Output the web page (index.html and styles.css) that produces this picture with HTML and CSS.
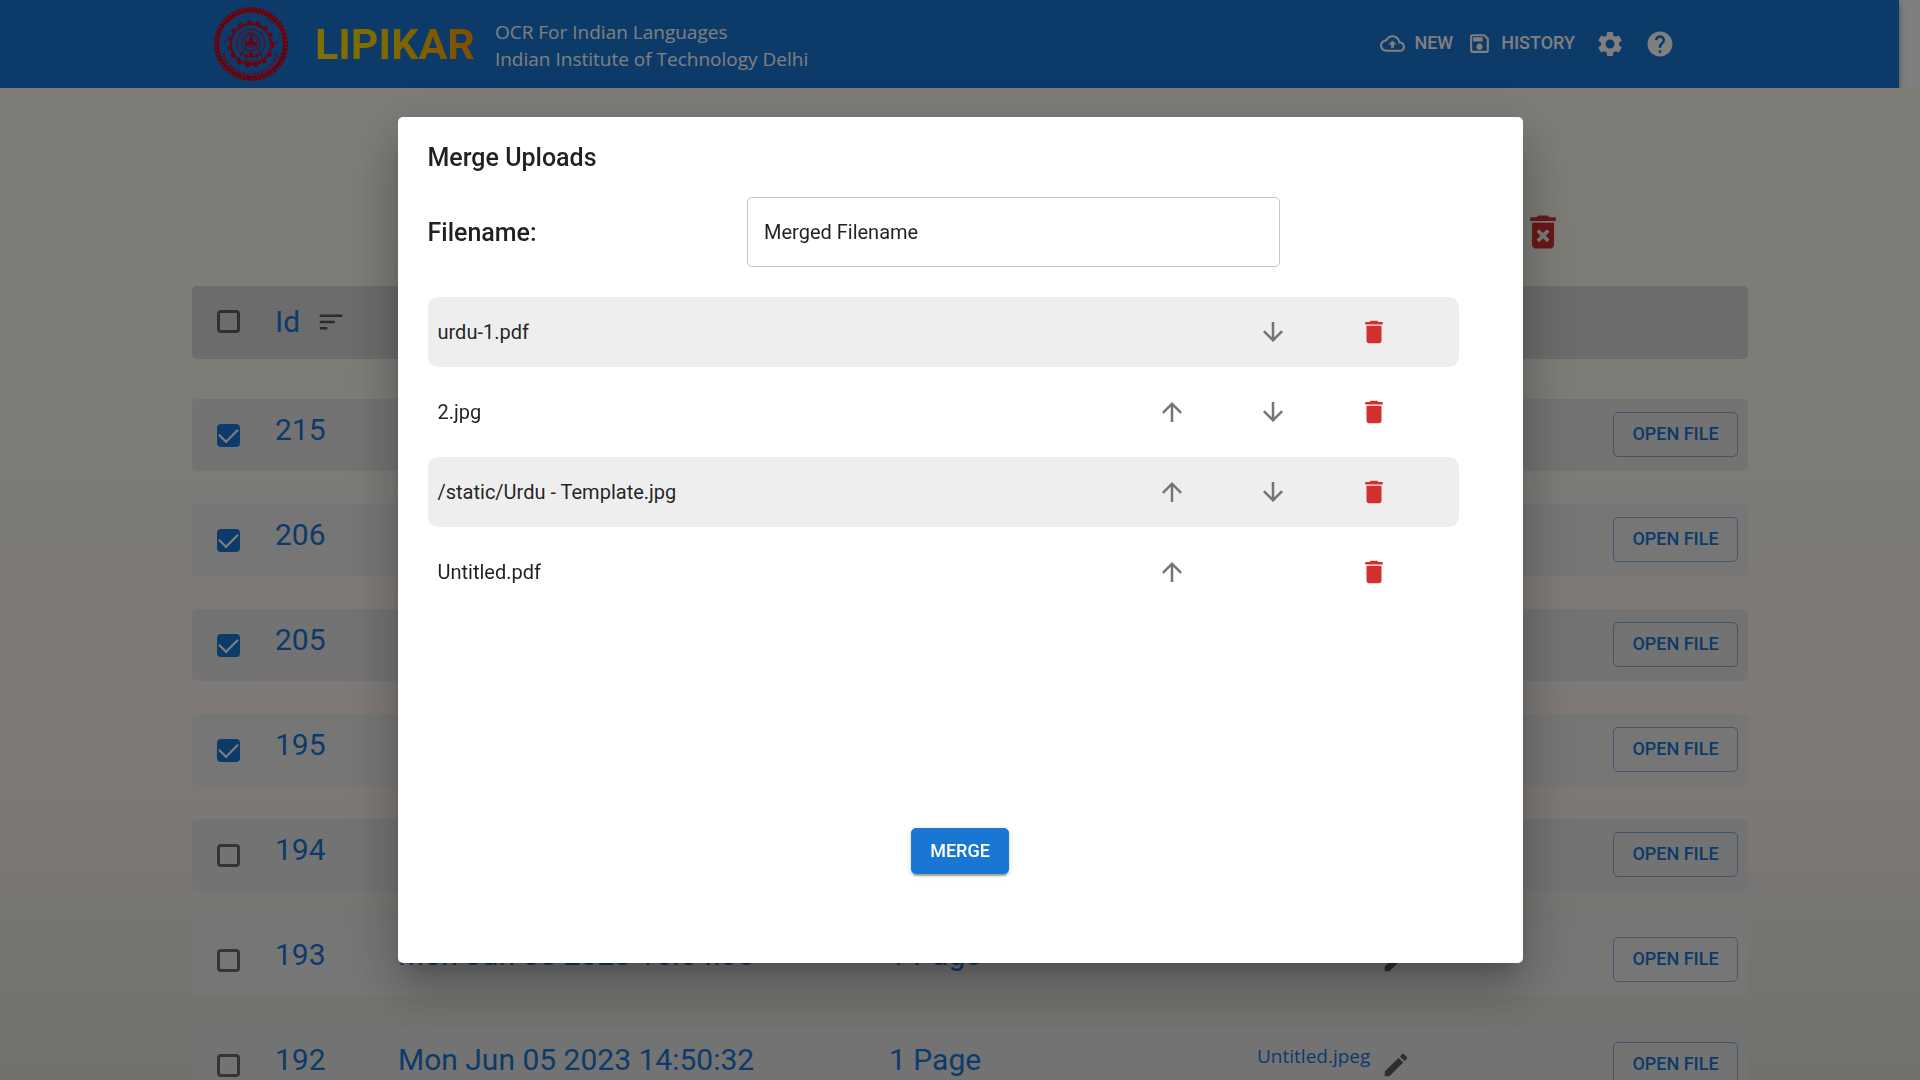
FILE: index.html
```html
<!DOCTYPE html>
<html lang="en">
<head>
<meta charset="utf-8">
<meta name="viewport" content="width=device-width, initial-scale=1">
<title>Lipikar - History</title>
<link rel="stylesheet" href="styles.css">
</head>
<body>
<svg class="defs" width="0" height="0" aria-hidden="true">
  <symbol id="i-up" viewBox="0 0 24 24"><path d="M4 12l1.41 1.41L11 7.83V20h2V7.83l5.58 5.59L20 12l-8-8-8 8z"/></symbol>
  <symbol id="i-down" viewBox="0 0 24 24"><path d="M20 12l-1.41-1.41L13 16.17V4h-2v12.17l-5.58-5.59L4 12l8 8 8-8z"/></symbol>
  <symbol id="i-delete" viewBox="0 0 24 24"><path d="M6 19c0 1.1.9 2 2 2h8c1.1 0 2-.9 2-2V7H6v12zM19 4h-3.500l-1-1h-5l-1 1H5v2h14V4z"/></symbol>
  <symbol id="i-edit" viewBox="0 0 24 24"><path d="M3 17.250V21h3.750L17.810 9.940l-3.750-3.750L3 17.250zM20.710 7.040c.39-.39.39-1.020 0-1.410l-2.340-2.340c-.39-.39-1.020-.39-1.410 0l-1.830 1.830 3.750 3.750 1.830-1.830z"/></symbol>
</svg>

<header class="appbar">
  <svg class="emblem" viewBox="0 0 74 74" role="img" aria-label="IIT Delhi">
    <circle class="e-beads" cx="37" cy="37" r="35"/>
    <circle class="e-line e-thick" cx="37" cy="37" r="33"/>
    <circle class="e-cog" cx="37" cy="37" r="22"/>
    <circle class="e-line e-thick" cx="37" cy="37" r="20"/>
    <circle class="e-line" cx="37" cy="36" r="14"/>
    <circle class="e-line" cx="37" cy="35" r="9"/>
    <circle class="e-line" cx="37" cy="34" r="6"/>
    <path class="e-fill" d="M37 28l2 4v3h3v3h-10v-3h3v-3z"/>
    <path class="e-line" d="M32 38L24 54h26L42 38M27 56h20M31 58h12"/>
    <path class="e-fill" d="M30 50l2-3 2 2-1 3zM35 51v-5l2-2 2 2v5zM41 50l1-3 3 1-1 3z"/>
    <circle class="e-fill" cx="11" cy="35" r="1"/><circle class="e-fill" cx="63" cy="35" r="1"/>
    <path id="arc-top" fill="none" d="M10 33a27 27 0 0 1 54 0"/>
    <path id="arc-low" fill="none" d="M8 40a29 29 0 0 0 58 0"/>
    <text class="e-text"><textPath href="#arc-top" startOffset="50%">भारतीय प्रौद्योगिकी संस्थान दिल्ली</textPath></text>
    <text class="e-text"><textPath href="#arc-low" startOffset="50%">INDIAN INSTITUTE OF TECHNOLOGY DELHI</textPath></text>
  </svg>
  <h1 class="brand">LIPIKAR</h1>
  <p class="tagline">OCR For Indian Languages<br>Indian Institute of Technology Delhi</p>
  <nav class="nav">
    <a class="nav-link" href="#new">
      <svg class="icon-md" viewBox="0 0 24 24"><path d="M19.350 10.040C18.670 6.590 15.640 4 12 4 9.110 4 6.600 5.640 5.350 8.040 2.340 8.360 0 10.910 0 14c0 3.310 2.690 6 6 6h13c2.760 0 5-2.240 5-5 0-2.640-2.050-4.780-4.650-4.960zM19 18H6c-2.210 0-4-1.790-4-4 0-2.050 1.530-3.760 3.560-3.970l1.070-.11.5-.95C8.080 7.140 9.940 6 12 6c2.620 0 4.880 1.860 5.390 4.430l.3 1.500 1.530.11c1.560.1 2.780 1.410 2.780 2.960 0 1.650-1.350 3-3 3zM8 13h2.550v3h2.900v-3H16l-4-4z"/></svg>
      NEW</a>
    <a class="nav-link" href="#history">
      <svg class="icon-md" viewBox="0 0 24 24"><path d="M17 3H5c-1.110 0-2 .9-2 2v14c0 1.100.89 2 2 2h14c1.100 0 2-.9 2-2V7l-4-4zm2 16H5V5h11.170L19 7.830V19zm-7-7c-1.660 0-3 1.340-3 3s1.340 3 3 3 3-1.340 3-3-1.340-3-3-3zM6 6h9v4H6z"/></svg>
      HISTORY</a>
    <button class="icon-btn" type="button" aria-label="Settings">
      <svg class="icon" viewBox="0 0 24 24"><path d="M19.140 12.940c.04-.3.06-.61.06-.94 0-.32-.02-.64-.07-.94l2.030-1.580c.18-.14.23-.41.12-.61l-1.920-3.320c-.12-.22-.37-.29-.59-.22l-2.390.96c-.5-.38-1.030-.7-1.620-.94l-.36-2.540c-.04-.24-.24-.41-.48-.41h-3.840c-.24 0-.43.17-.47.41l-.36 2.540c-.59.24-1.130.57-1.620.94l-2.390-.96c-.22-.08-.47 0-.59.22L2.740 8.870c-.12.21-.08.47.12.61l2.030 1.580c-.05.3-.09.63-.09.94s.02.64.07.94l-2.030 1.580c-.18.14-.23.41-.12.61l1.920 3.320c.12.22.37.29.59.22l2.390-.96c.5.38 1.030.7 1.620.94l.36 2.540c.05.24.24.41.48.41h3.840c.24 0 .44-.17.47-.41l.36-2.540c.59-.24 1.130-.56 1.620-.94l2.390.96c.22.08.47 0 .59-.22l1.920-3.320c.12-.22.07-.47-.12-.61l-2.010-1.580zM12 15.600c-1.980 0-3.600-1.620-3.600-3.600s1.620-3.600 3.600-3.600 3.600 1.620 3.600 3.600-1.620 3.600-3.600 3.600z"/></svg>
    </button>
    <button class="icon-btn" type="button" aria-label="Help">
      <svg class="icon" viewBox="0 0 24 24"><path d="M12 2C6.480 2 2 6.480 2 12s4.480 10 10 10 10-4.480 10-10S17.520 2 12 2zm1 17h-2v-2h2v2zm2.070-7.750l-.9.920C13.450 12.900 13 13.500 13 15h-2v-.5c0-1.100.45-2.100 1.170-2.830l1.240-1.260c.37-.36.59-.86.59-1.410 0-1.100-.9-2-2-2s-2 .9-2 2H8c0-2.210 1.790-4 4-4s4 1.790 4 4c0 .88-.36 1.680-.93 2.250z"/></svg>
    </button>
  </nav>
</header>

<main class="page">
  <div class="toolbar">
    <button class="icon-btn danger" type="button" aria-label="Delete selected">
      <svg class="icon-lg" viewBox="0 0 24 24"><path d="M6 19c0 1.100.9 2 2 2h8c1.100 0 2-.9 2-2V7H6v12zm2.460-7.120l1.410-1.410L12 12.590l2.120-2.120 1.410 1.410L13.410 14l2.120 2.120-1.410 1.410L12 15.410l-2.120 2.120-1.410-1.410L10.590 14l-2.130-2.120zM15.500 4l-1-1h-5l-1 1H5v2h14V4z"/></svg>
    </button>
  </div>
  <table class="uploads">
    <thead>
      <tr>
        <th><input class="check" type="checkbox" aria-label="Select all"></th>
        <th class="sortable">Id <svg class="icon" viewBox="0 0 24 24"><path d="M3 18h6v-2H3v2zM3 6v2h18V6H3zm0 7h12v-2H3v2z"/></svg></th>
      </tr>
    </thead>
    <tbody>
      <tr><td><input class="check" type="checkbox" aria-label="Select 215" checked></td><td class="value">215</td><td></td><td></td><td></td><td class="action"><button class="open" type="button">OPEN FILE</button></td></tr>
      <tr><td><input class="check" type="checkbox" aria-label="Select 206" checked></td><td class="value">206</td><td></td><td></td><td></td><td class="action"><button class="open" type="button">OPEN FILE</button></td></tr>
      <tr><td><input class="check" type="checkbox" aria-label="Select 205" checked></td><td class="value">205</td><td></td><td></td><td></td><td class="action"><button class="open" type="button">OPEN FILE</button></td></tr>
      <tr><td><input class="check" type="checkbox" aria-label="Select 195" checked></td><td class="value">195</td><td></td><td></td><td></td><td class="action"><button class="open" type="button">OPEN FILE</button></td></tr>
      <tr><td><input class="check" type="checkbox" aria-label="Select 194"></td><td class="value">194</td><td></td><td></td><td></td><td class="action"><button class="open" type="button">OPEN FILE</button></td></tr>
      <tr><td><input class="check" type="checkbox" aria-label="Select 193"></td><td class="value">193</td><td class="value">Mon Jun 05 2023 16:54:36</td><td class="value">1 Page</td><td class="file"><span class="file-name"></span><button class="icon-btn edit" type="button" aria-label="Rename"><svg class="icon"><use href="#i-edit"/></svg></button></td><td class="action"><button class="open" type="button">OPEN FILE</button></td></tr>
      <tr><td><input class="check" type="checkbox" aria-label="Select 192"></td><td class="value">192</td><td class="value">Mon Jun 05 2023 14:50:32</td><td class="value">1 Page</td><td class="file"><span class="file-name">Untitled.jpeg</span><button class="icon-btn edit" type="button" aria-label="Rename"><svg class="icon"><use href="#i-edit"/></svg></button></td><td class="action"><button class="open" type="button">OPEN FILE</button></td></tr>
    </tbody>
  </table>
</main>

<div class="backdrop">
  <section class="dialog" role="dialog" aria-modal="true" aria-labelledby="merge-title">
    <h2 class="dialog-title" id="merge-title">Merge Uploads</h2>
    <div class="field">
      <label class="dialog-title" for="merge-name">Filename:</label>
      <input class="text-input" id="merge-name" type="text" value="Merged Filename">
    </div>
    <ul class="merge-list">
      <li class="merge-item">
        <span>urdu-1.pdf</span>
        <button class="icon-btn down" type="button" aria-label="Move down"><svg class="icon"><use href="#i-down"/></svg></button>
        <button class="icon-btn danger delete" type="button" aria-label="Remove"><svg class="icon"><use href="#i-delete"/></svg></button>
      </li>
      <li class="merge-item">
        <span>2.jpg</span>
        <button class="icon-btn up" type="button" aria-label="Move up"><svg class="icon"><use href="#i-up"/></svg></button>
        <button class="icon-btn down" type="button" aria-label="Move down"><svg class="icon"><use href="#i-down"/></svg></button>
        <button class="icon-btn danger delete" type="button" aria-label="Remove"><svg class="icon"><use href="#i-delete"/></svg></button>
      </li>
      <li class="merge-item">
        <span>/static/Urdu - Template.jpg</span>
        <button class="icon-btn up" type="button" aria-label="Move up"><svg class="icon"><use href="#i-up"/></svg></button>
        <button class="icon-btn down" type="button" aria-label="Move down"><svg class="icon"><use href="#i-down"/></svg></button>
        <button class="icon-btn danger delete" type="button" aria-label="Remove"><svg class="icon"><use href="#i-delete"/></svg></button>
      </li>
      <li class="merge-item">
        <span>Untitled.pdf</span>
        <button class="icon-btn up" type="button" aria-label="Move up"><svg class="icon"><use href="#i-up"/></svg></button>
        <button class="icon-btn danger delete" type="button" aria-label="Remove"><svg class="icon"><use href="#i-delete"/></svg></button>
      </li>
    </ul>
    <button class="merge" type="button">MERGE</button>
  </section>
</div>
</body>
</html>
```
FILE: styles.css
```css
:root {
  --primary: #1976d2;
  --danger: #d32f2f;
}

* { box-sizing: border-box; }

body {
  margin: 0;
  height: 100vh;
  overflow: hidden;
  display: flex;
  flex-direction: column;
  background: #fff;
  font: 400 20px/30px Roboto, "Liberation Sans", sans-serif;
  color: rgba(0, 0, 0, 0.87);
}

button, input { font: inherit; }
button { cursor: pointer; }
.defs { position: absolute; }

.icon, .icon-md, .icon-lg { display: block; flex: none; fill: currentColor; }
.icon { width: 30px; height: 30px; }
.icon-md { width: 25px; height: 25px; }
.icon-lg { width: 44px; height: 44px; }

.icon-btn {
  display: flex;
  padding: 0;
  border: 0;
  background: none;
  color: inherit;
}
.danger { color: var(--danger); }

/* App bar */
.appbar {
  flex: none;
  display: flex;
  align-items: center;
  height: 88px;
  margin-right: 21px;
  padding: 0 224px 0 214px;
  background: var(--primary);
  color: #fff;
  box-shadow: 0 2px 5px rgba(0, 0, 0, 0.2), 0 5px 6px rgba(0, 0, 0, 0.14), 0 1px 12px rgba(0, 0, 0, 0.12);
}
.emblem { width: 74px; height: 74px; flex: none; }
.e-beads { fill: none; stroke: #dc0010; stroke-width: 4; stroke-dasharray: 3 1; }
.e-line { fill: none; stroke: #dc0010; stroke-width: 1; }
.e-thick { stroke-width: 2; }
.e-cog { fill: none; stroke: #dc0010; stroke-width: 3; stroke-dasharray: 4 5; }
.e-fill { fill: #dc0010; }
.e-text { fill: #dc0010; font: 700 4px Roboto, "Noto Sans", sans-serif; text-anchor: middle; }

.brand {
  margin: 0 20px 0 27px;
  font-size: 43px;
  line-height: 60px;
  font-weight: 700;
  background: linear-gradient(90deg, #ffe000, #ffd000 50%, #ff9a00);
  background-clip: text;
  -webkit-background-clip: text;
  color: transparent;
}
.tagline {
  margin: 0;
  padding-top: 4px;
  font-family: "Open Sans", "Noto Sans", sans-serif;
  font-size: 19px;
  line-height: 27px;
  white-space: nowrap;
}
.nav { display: flex; align-items: center; gap: 20px; margin-left: auto; }
.nav-link {
  display: flex;
  align-items: center;
  gap: 9px;
  padding-bottom: 2px;
  color: inherit;
  font-size: 18px;
  font-weight: 500;
  text-decoration: none;
}
.nav-link + .nav-link { margin-left: -6px; }

/* History page */
.page {
  flex: 1;
  min-height: 0;
  overflow: hidden;
  padding: 0 172px 0 192px;
  background: linear-gradient(#fcfaf0, #faf7ee 40%, #fdf4ef 58%, #f9f1ed 72%, #eeebe6 84%, #e4e2da);
}
.toolbar {
  display: flex;
  justify-content: flex-end;
  height: 198px;
  padding: 122px 183px 0 0;
}
.uploads, .uploads thead, .uploads tbody { display: block; }
.uploads tr {
  display: grid;
  grid-template-columns: 83px 123px 491fr 368fr 356fr 135px;
  align-items: center;
  height: 72px;
  margin-bottom: 33px;
  border-radius: 5px;
  background: #e6e6e8;
}
.uploads tbody tr:nth-child(even) { background: #ededef; }
.uploads thead tr {
  height: 73px;
  margin-bottom: 40px;
  padding-bottom: 2px;
  background: #d8d8d9;
}
.uploads th, .uploads td { padding: 0; text-align: left; }
.uploads .value, .sortable {
  color: var(--primary);
  font-size: 30px;
  font-weight: 400;
  line-height: 40px;
}
.uploads .value { padding-bottom: 11px; }
.uploads .action { padding-bottom: 2px; }
.sortable { display: flex; align-items: center; gap: 16px; }
.sortable .icon { color: rgba(0, 0, 0, 0.6); }

.check {
  appearance: none;
  display: grid;
  place-items: center;
  width: 23px;
  height: 23px;
  margin: 0 0 0 25px;
  border: 3px solid rgba(0, 0, 0, 0.55);
  border-radius: 4px;
}
.check:checked { background: var(--primary); border-color: var(--primary); }
.check:checked::after {
  content: "";
  width: 9px;
  height: 16px;
  margin-top: -5px;
  border: solid #fff;
  border-width: 0 2px 2px 0;
  rotate: 45deg;
}

.file { display: flex; align-items: center; }
.file-name {
  width: 124px;
  padding-bottom: 18px;
  color: var(--primary);
  font-family: "Open Sans", "Noto Sans", sans-serif;
  font-size: 19px;
}
.edit { color: rgba(0, 0, 0, 0.6); }

.open {
  display: block;
  width: 125px;
  height: 45px;
  padding: 0;
  border: 1px solid rgba(25, 118, 210, 0.5);
  border-radius: 5px;
  background: none;
  color: var(--primary);
  font-size: 18px;
  font-weight: 500;
}

/* Merge dialog */
.backdrop {
  position: fixed;
  inset: 0;
  display: flex;
  align-items: center;
  justify-content: center;
  background: rgba(0, 0, 0, 0.5);
}
.dialog {
  width: 1125px;
  max-width: calc(100% - 80px);
  padding: 26px 30px 89px;
  border-radius: 5px;
  background: #fff;
  box-shadow: 0 14px 19px -9px rgba(0, 0, 0, 0.2), 0 30px 48px 4px rgba(0, 0, 0, 0.14), 0 11px 58px 10px rgba(0, 0, 0, 0.12);
}
.dialog-title {
  margin: 0 0 24px;
  font-size: 25px;
  line-height: 30px;
  font-weight: 500;
}
.field {
  display: grid;
  grid-template-columns: 30% 50%;
  align-items: center;
  margin-bottom: 30px;
}
.field .dialog-title { margin: 0; padding-top: 2px; }
.text-input {
  height: 70px;
  padding: 0 16px;
  border: 1px solid #c4c4c4;
  border-radius: 5px;
  background: #fff;
  color: inherit;
}
.merge-list {
  display: flex;
  flex-direction: column;
  gap: 10px;
  min-height: 531px;
  margin: 0 34px 0 0;
  padding: 0;
  list-style: none;
}
.merge-item {
  display: grid;
  grid-template-columns: 1fr repeat(3, 101px);
  align-items: center;
  height: 70px;
  padding: 0 34px 0 10px;
  border-radius: 10px;
}
.merge-item:nth-child(odd) { background: #eee; }
.merge-item .icon-btn { justify-self: center; grid-row: 1; }
.up { grid-column: 2; color: #757575; }
.down { grid-column: 3; color: #757575; }
.delete { grid-column: 4; }

.merge {
  display: block;
  width: 98px;
  height: 46px;
  margin: 0 auto;
  padding: 0;
  border: 0;
  border-radius: 5px;
  background: var(--primary);
  color: #fff;
  font-size: 18px;
  font-weight: 500;
  box-shadow: 0 4px 1px -2px rgba(0, 0, 0, 0.2), 0 2px 2px rgba(0, 0, 0, 0.14), 0 1px 6px rgba(0, 0, 0, 0.12);
}
```
